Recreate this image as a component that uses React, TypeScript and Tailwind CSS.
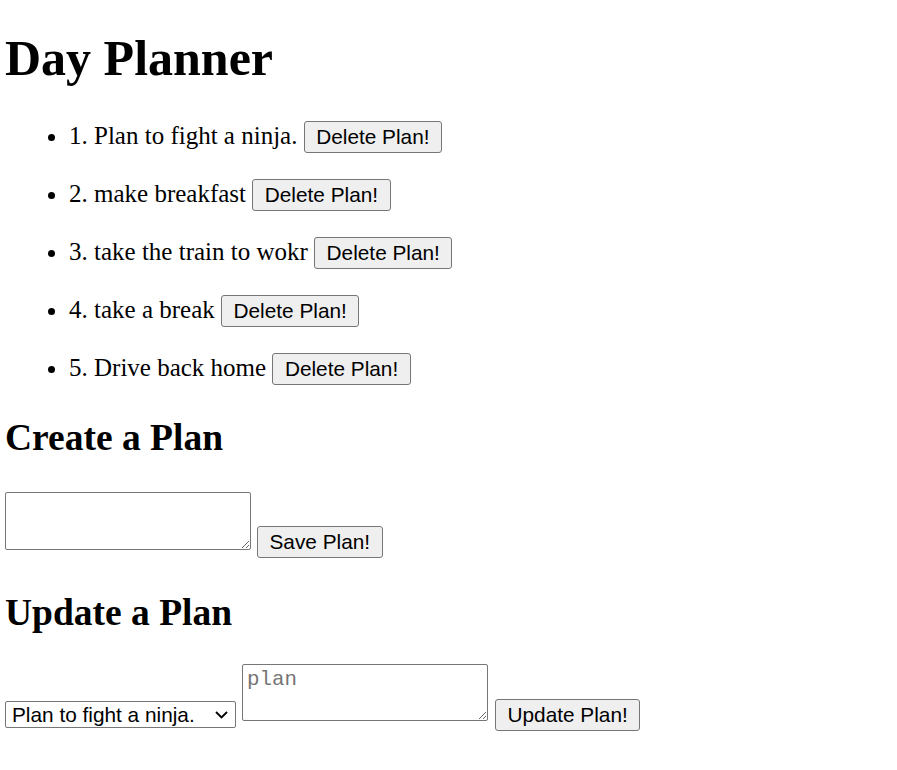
import { useState } from "react";

const initialPlans = [
  "Plan to fight a ninja.",
  "make breakfast",
  "take the train to wokr",
  "take a break",
  "Drive back home",
];

const btn =
  "inline-block align-baseline font-['Liberation_Sans',Arial,sans-serif] text-[20.8px] leading-[24px] text-black bg-[#efefef] border border-[#767676] rounded-[3px] px-[11.5px] py-[3px] hover:bg-[#e5e5e5]";

const area =
  "block bg-white border border-[#767676] rounded-[2px] font-['Liberation_Mono',monospace] text-[20.8px] leading-[24px] px-[4px] py-[3px] placeholder:text-[#757575] resize";

export default function App() {
  const [plans, setPlans] = useState(initialPlans);
  const [draft, setDraft] = useState("");
  const [picked, setPicked] = useState(0);
  const [edit, setEdit] = useState("");

  return (
    <div className="min-h-screen bg-white text-black font-['Liberation_Serif','Times_New_Roman',serif] pl-[5px] pt-[30px]">
      <h1 className="text-[50px] font-bold leading-[57px]">Day Planner</h1>

      <ul className="list-disc pl-[64px] mt-[34px] space-y-[26px] text-[25px] leading-[29px]">
        {plans.map((p, i) => (
          <li key={i}>
            {i + 1}. {p}{" "}
            <button
              className={btn}
              onClick={() => setPlans(plans.filter((_, j) => j !== i))}
            >
              Delete Plan!
            </button>
          </li>
        ))}
      </ul>

      <h2 className="text-[37.5px] font-bold leading-[43px] mt-[31px]">Create a Plan</h2>
      <div className="flex items-end gap-[6px] mt-[33px]">
        <textarea
          className={`${area} w-[246px] h-[58px] mb-[8px]`}
          value={draft}
          onChange={(e) => setDraft(e.target.value)}
        />
        <button
          className={btn}
          onClick={() => {
            if (draft.trim()) setPlans([...plans, draft.trim()]);
            setDraft("");
          }}
        >
          Save Plan!
        </button>
      </div>

      <h2 className="text-[37.5px] font-bold leading-[43px] mt-[33px]">Update a Plan</h2>
      <div className="flex items-end mt-[30px]">
        <div className="relative mb-[3px]">
          <select
            className="block appearance-none w-[231px] h-[27px] border border-[#767676] rounded-[2px] bg-white font-['Liberation_Sans',Arial,sans-serif] text-[20.8px] leading-[24px] pl-[6px] pr-[28px]"
            value={picked}
            onChange={(e) => setPicked(Number(e.target.value))}
          >
            {plans.map((p, i) => (
              <option key={i} value={i}>
                {p}
              </option>
            ))}
          </select>
          <svg
            className="pointer-events-none absolute right-[8px] top-[10px]"
            width="13"
            height="8"
            viewBox="0 0 13 8"
            fill="none"
            stroke="#000"
            strokeWidth="1.8"
          >
            <path d="M1 1l5.5 5.5L12 1" />
          </svg>
        </div>
        <textarea
          className={`${area} w-[246px] h-[57px] mb-[10px] ml-[6px]`}
          placeholder="plan"
          value={edit}
          onChange={(e) => setEdit(e.target.value)}
        />
        <button
          className={`${btn} ml-[7px]`}
          onClick={() => {
            if (!edit.trim()) return;
            setPlans(plans.map((p, i) => (i === picked ? edit.trim() : p)));
            setEdit("");
          }}
        >
          Update Plan!
        </button>
      </div>
    </div>
  );
}
